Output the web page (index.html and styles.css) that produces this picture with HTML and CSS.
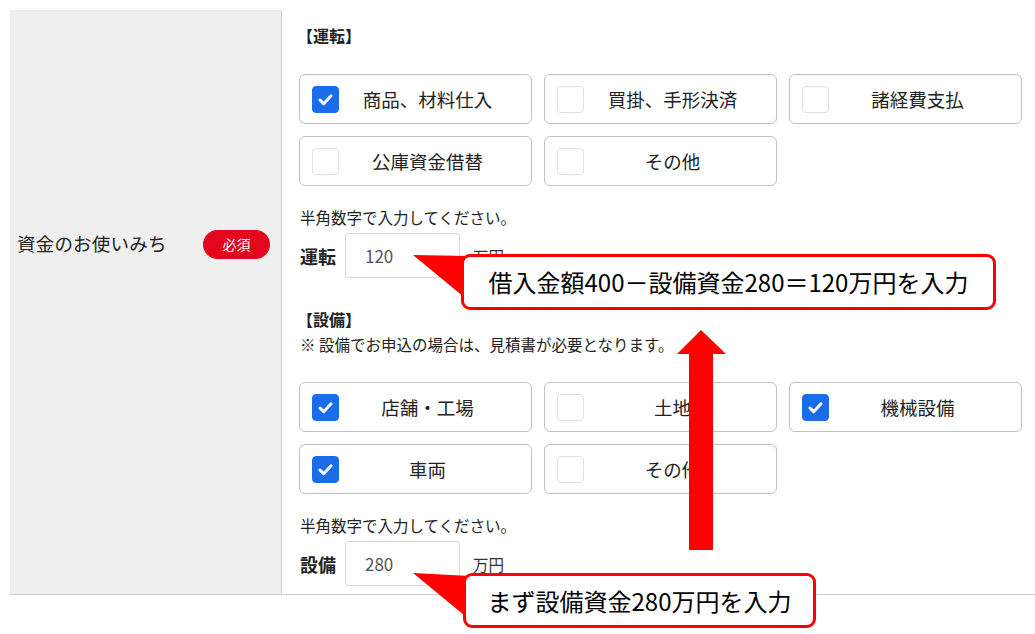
FILE: index.html
```html
<!DOCTYPE html>
<html lang="ja">
<head>
    <meta charset="utf-8">
    <title>資金のお使いみち</title>
    <link rel="stylesheet" href="styles.css">
</head>
<body>
    <div class="form">
        <div class="form-row">
            <div class="form-label">
                <span class="label-text">資金のお使いみち</span>
                <span class="badge">必須</span>
            </div>

            <div class="form-body">
                <!-- 運転 -->
                <p class="group-title">【運転】</p>
                <div class="choices">
                    <label class="choice">
                        <span class="box checked"><svg viewBox="0 0 27 27"><polyline points="7.5,14 11.5,18 19.5,9.5"/></svg></span>
                        <span class="choice-text">商品、材料仕入</span>
                    </label>
                    <label class="choice">
                        <span class="box"></span>
                        <span class="choice-text">買掛、手形決済</span>
                    </label>
                    <label class="choice">
                        <span class="box"></span>
                        <span class="choice-text">諸経費支払</span>
                    </label>
                    <label class="choice">
                        <span class="box"></span>
                        <span class="choice-text">公庫資金借替</span>
                    </label>
                    <label class="choice">
                        <span class="box"></span>
                        <span class="choice-text">その他</span>
                    </label>
                </div>
                <p class="hint">半角数字で入力してください。</p>
                <div class="amount">
                    <span class="amount-label">運転</span>
                    <span class="amount-input">120</span>
                    <span class="unit">万円</span>
                </div>

                <!-- 設備 -->
                <p class="group-title second">【設備】</p>
                <p class="note">※ 設備でお申込の場合は、見積書が必要となります。</p>
                <div class="choices">
                    <label class="choice">
                        <span class="box checked"><svg viewBox="0 0 27 27"><polyline points="7.5,14 11.5,18 19.5,9.5"/></svg></span>
                        <span class="choice-text">店舗・工場</span>
                    </label>
                    <label class="choice">
                        <span class="box"></span>
                        <span class="choice-text">土地</span>
                    </label>
                    <label class="choice">
                        <span class="box checked"><svg viewBox="0 0 27 27"><polyline points="7.5,14 11.5,18 19.5,9.5"/></svg></span>
                        <span class="choice-text">機械設備</span>
                    </label>
                    <label class="choice">
                        <span class="box checked"><svg viewBox="0 0 27 27"><polyline points="7.5,14 11.5,18 19.5,9.5"/></svg></span>
                        <span class="choice-text">車両</span>
                    </label>
                    <label class="choice">
                        <span class="box"></span>
                        <span class="choice-text">その他</span>
                    </label>
                </div>
                <p class="hint second">半角数字で入力してください。</p>
                <div class="amount">
                    <span class="amount-label">設備</span>
                    <span class="amount-input">280</span>
                    <span class="unit">万円</span>
                </div>
            </div>
        </div>
    </div>

    <!-- annotations drawn over the form -->
    <svg class="marks" width="1035" height="634" viewBox="0 0 1035 634">
        <polygon points="413,255 470,256 470,302" />
        <polygon points="413,573 470,576 470,620" />
        <polygon points="701,330 726,354 713,354 713,550 689,550 689,354 677,354" />
    </svg>
    <div class="callout callout-top">借入金額400－設備資金280＝120万円を入力</div>
    <div class="callout callout-bottom">まず設備資金280万円を入力</div>
</body>
</html>
```

FILE: styles.css
```css
body {
    margin: 0;
    padding: 0;
    font-family: "Noto Sans CJK JP", "Noto Sans", sans-serif;
    color: #222;
    background-color: #fff;
}

.form {
    padding: 10px 0 0 10px;
}

.form-row {
    display: grid;
    grid-template-columns: 272px 1fr;
    border-bottom: 1px solid #cfcfcf;
}

.form-label {
    background-color: #efefef;
    border-right: 1px solid #cfcfcf;
    display: flex;
    align-items: flex-start;
    justify-content: space-between;
    padding: 219px 11px 0 7px;
}

.label-text {
    font-size: 18.5px;
    line-height: 28px;
    letter-spacing: 0.2px;
}

.badge {
    width: 67px;
    height: 29px;
    border-radius: 15px;
    background-color: #e3061c;
    color: #fff;
    font-size: 14px;
    line-height: 29px;
    text-align: center;
    margin-top: 1px;
}

.form-body {
    padding: 0 13px 8px 17px;
}

.group-title {
    margin: 13px 0 0 -2px;
    font-size: 16px;
    font-weight: bold;
    line-height: 24px;
}

.group-title.second {
    margin-top: 29px;
}

.note {
    margin: 2px 0 0 1px;
    font-size: 15.5px;
    line-height: 22px;
}

.choices {
    display: grid;
    grid-template-columns: repeat(3, 1fr);
    gap: 12px;
    margin-top: 27px;
}

.choice {
    height: 50px;
    box-sizing: border-box;
    border: 1px solid #c0c0c0;
    border-radius: 6px;
    display: flex;
    align-items: center;
    padding: 0 15px 0 12px;
    background-color: #fff;
}

.box {
    width: 27px;
    height: 27px;
    box-sizing: border-box;
    border: 1px solid #dde1e6;
    border-radius: 4px;
    background-color: #fff;
    flex-shrink: 0;
}

.box.checked {
    background-color: #1a6ce8;
    border-color: #1a6ce8;
}

.box svg {
    display: block;
    width: 25px;
    height: 25px;
    fill: none;
    stroke: #fff;
    stroke-width: 3.2;
    stroke-linecap: round;
    stroke-linejoin: round;
}

.choice-text {
    flex: 1;
    text-align: center;
    font-size: 18.5px;
    line-height: 26px;
}

.hint {
    margin: 20px 0 0 1px;
    font-size: 15.5px;
    line-height: 22px;
}

.hint.second {
    margin-top: 20px;
}

.amount {
    display: flex;
    align-items: center;
    margin-top: 5px;
}

.amount-label {
    width: 45px;
    margin-left: 1px;
    font-size: 18px;
    font-weight: bold;
}

.amount-input {
    width: 115px;
    height: 45px;
    box-sizing: border-box;
    border: 1px solid #d4d9de;
    border-radius: 3px;
    padding-left: 19px;
    font-size: 17px;
    line-height: 43px;
    color: #555;
}

.unit {
    margin-left: 13px;
    font-size: 15.5px;
    color: #333;
}

/* annotations */
.marks {
    position: absolute;
    left: 0;
    top: 0;
    fill: #ff0000;
}

.callout {
    position: absolute;
    box-sizing: border-box;
    border: 3px solid #ff0000;
    border-radius: 9px;
    background-color: #fff;
    color: #000;
    font-size: 24px;
    text-align: center;
}

.callout-top {
    left: 461px;
    top: 254px;
    width: 535px;
    height: 56px;
    line-height: 50px;
}

.callout-bottom {
    left: 463px;
    top: 573px;
    width: 353px;
    height: 55px;
    line-height: 49px;
}
```
